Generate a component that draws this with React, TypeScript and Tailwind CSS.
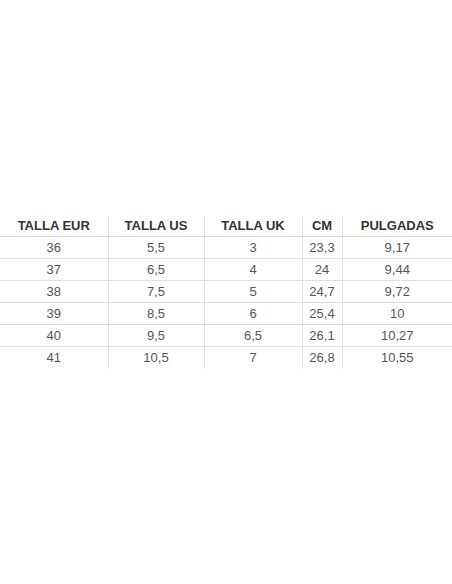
import React from 'react';

const headers = ['TALLA EUR', 'TALLA US', 'TALLA UK', 'CM', 'PULGADAS'];

const rows = [
  ['36', '5,5', '3', '23,3', '9,17'],
  ['37', '6,5', '4', '24', '9,44'],
  ['38', '7,5', '5', '24,7', '9,72'],
  ['39', '8,5', '6', '25,4', '10'],
  ['40', '9,5', '6,5', '26,1', '10,27'],
  ['41', '10,5', '7', '26,8', '10,55'],
];

const widths = ['w-[108px]', 'w-[96px]', 'w-[98px]', 'w-[40px]', 'w-[110px]'];

export default function App() {
  return (
    <div className="h-[584px] w-[452px] bg-white flex flex-col justify-center" style={{ fontFamily: '"Liberation Sans", Arial, sans-serif' }}>
      <table className="w-[452px] border-collapse table-fixed">
        <thead>
          <tr className="h-[21px] border-b border-[#dedede]">
            {headers.map((h, i) => (
              <th
                key={h}
                className={`${widths[i]} p-0 text-center text-[13px] font-bold text-[#333333] leading-none ${i < 4 ? 'border-r border-[#e2e2e2]' : ''}`}
              >
                {h}
              </th>
            ))}
          </tr>
        </thead>
        <tbody>
          {rows.map((row, r) => (
            <tr key={r} className={`h-[22px] ${r < rows.length - 1 ? 'border-b border-[#dedede]' : ''}`}>
              {row.map((cell, i) => (
                <td
                  key={i}
                  className={`p-0 text-center text-[13px] text-[#555555] leading-none ${i < 4 ? 'border-r border-[#e2e2e2]' : ''}`}
                >
                  {cell}
                </td>
              ))}
            </tr>
          ))}
        </tbody>
      </table>
    </div>
  );
}
